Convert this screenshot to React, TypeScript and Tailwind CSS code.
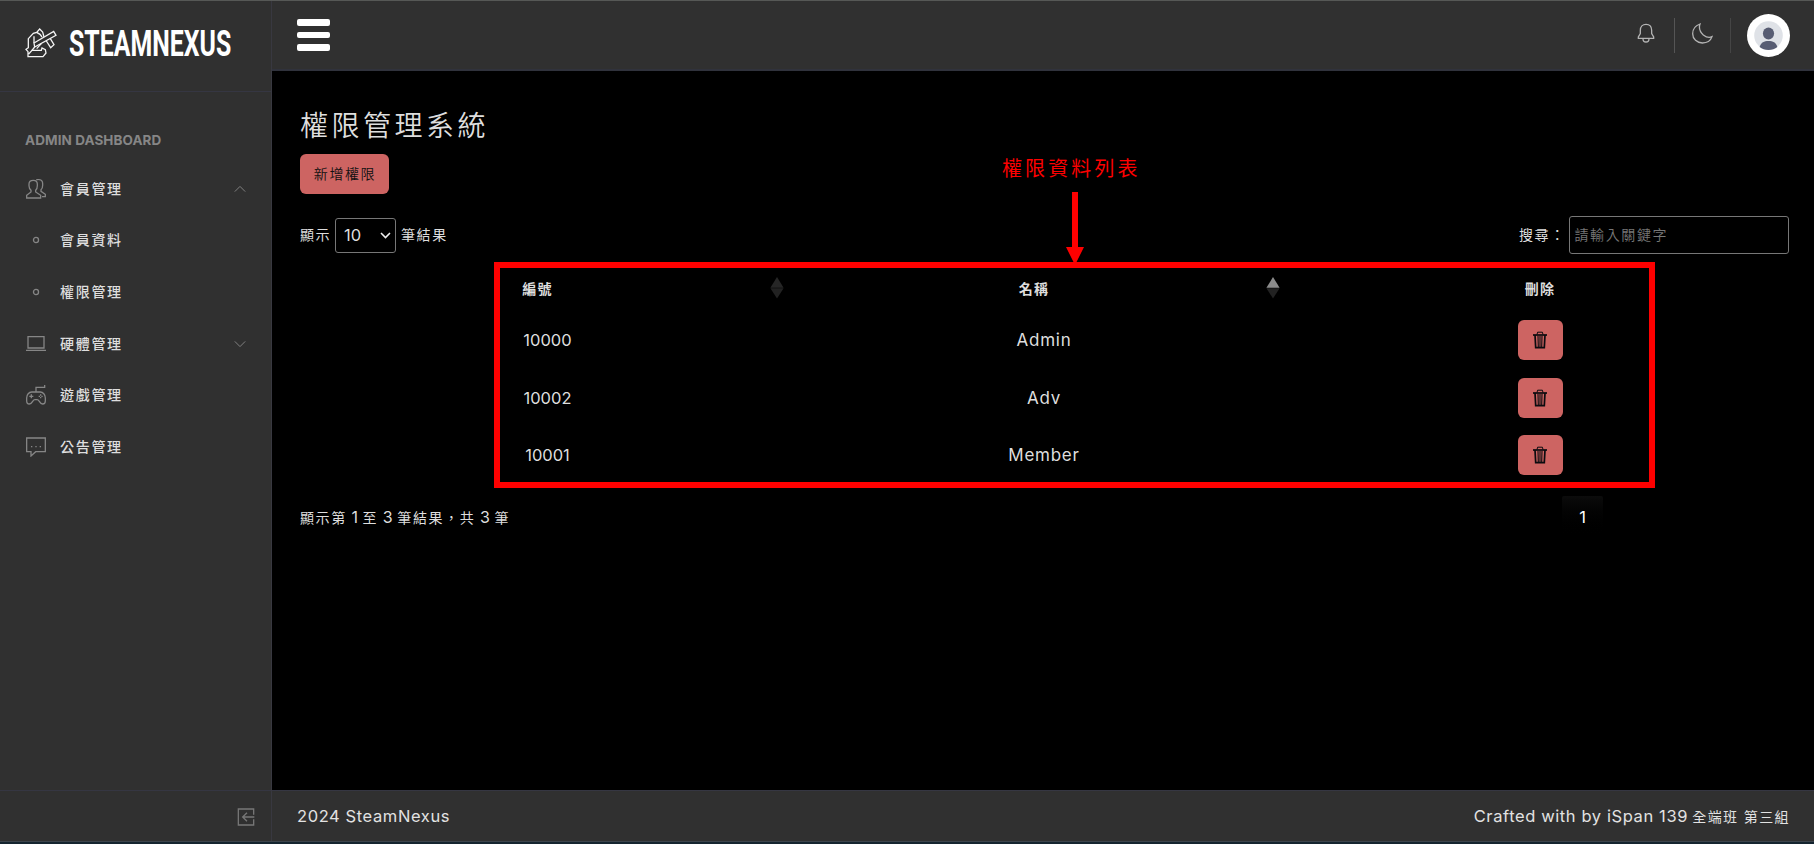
import React from "react";

const CJK = "font-['Inter','Noto_Sans_CJK_TC',sans-serif]";

const line = { fill: "none", stroke: "currentColor", strokeWidth: 3.9 } as const;

function Logo() {
  return (
    <svg className="h-[30px] w-8 shrink-0 text-[#f4f4f4]" viewBox="77 85 96 90" {...line} strokeWidth={3.9}>
      <path d="M104 130 L163 95 L170 107 L106 142 Z" />
      <path d="M134 112 L130 97 L121 88 L112 98 L102 101 L87 117 L87 144 L80 149 L86 156 L86 171 L131 171 L140 160 L138 150 L128 145 L126 152 H98 L88 163" />
      <path d="M112 98 L122 104 L128 112 M104 130 V110 M106 142 L98 152 M126 132 L112 147 M141 124 L154 144 L164 135 L153 117" />
    </svg>
  );
}

function PeopleIcon() {
  return (
    <svg className="h-5 w-5" viewBox="0 0 60 60" {...line}>
      <path d="M2 57 H44 V49 L29 39 V34 C33 30 34 26 34 20 V15 C34 7 30 4 22 4 C13 4 9 8 9 15 V20 C9 26 11 30 15 34 V39 L2 49 Z" />
      <path d="M31 3 C34 1 38 1 40 2 C47 3 50 7 50 14 V19 C50 25 49 29 45 32 V37 L58 46 V53 H48" />
    </svg>
  );
}
function DotIcon() {
  return (
    <svg className="h-5 w-5" viewBox="0 0 60 60" {...line}>
      <circle cx="30" cy="30" r="7.6" />
    </svg>
  );
}
function LaptopIcon() {
  return (
    <svg className="h-5 w-5" viewBox="0 0 60 60" {...line}>
      <path d="M6 8 H54 V42 H6 Z M0 49 H60" />
    </svg>
  );
}
function GamepadIcon() {
  return (
    <svg className="h-5 w-5" viewBox="0 0 60 60" {...line}>
      <path d="M56 0 V7 H30 V21" />
      <path d="M17 21 H43 C51 21 58 29 58 39 V48 C58 54 55 57 50 57 C45 57 43 54 40 49 C38 46 36 44 33 44 H27 C24 44 22 46 20 49 C17 54 15 57 10 57 C5 57 2 54 2 48 V39 C2 29 9 21 17 21 Z" />
      <path d="M16 28 V40 M10 34 H22" />
      <path d="M44 28 V32 M44 36 V40 M38 34 H42 M46 34 H50" />
    </svg>
  );
}
function ChatIcon() {
  return (
    <svg className="h-5 w-5" viewBox="0 0 60 60" {...line}>
      <path d="M2 3 H58 V44 H29 L15 57 V44 H2 Z" />
      <path d="M15 29 H19 M28 29 H32 M41 29 H45" />
    </svg>
  );
}
function Chevron({ up }: { up?: boolean }) {
  return (
    <svg className="h-3 w-3 text-[#808080]" viewBox="0 0 12 12" fill="none" stroke="currentColor" strokeWidth="1">
      <path d={up ? "M0.8 8.6 L6 3.4 L11.2 8.6" : "M0.8 3.4 L6 8.6 L11.2 3.4"} />
    </svg>
  );
}

const NAV: { label: string; icon: React.ReactNode; arrow?: "up" | "down" }[] = [
  { label: "會員管理", icon: <PeopleIcon />, arrow: "up" },
  { label: "會員資料", icon: <DotIcon /> },
  { label: "權限管理", icon: <DotIcon /> },
  { label: "硬體管理", icon: <LaptopIcon />, arrow: "down" },
  { label: "遊戲管理", icon: <GamepadIcon /> },
  { label: "公告管理", icon: <ChatIcon /> },
];

const ROWS = [
  { id: "10000", name: "Admin" },
  { id: "10002", name: "Adv" },
  { id: "10001", name: "Member" },
];

function Sidebar() {
  return (
    <aside className="flex w-[272px] shrink-0 flex-col border-r border-[#383840] bg-[#303030]">
      <div className="flex h-[91px] items-start border-b border-[#353642] pl-[25px] pt-[27px]">
        <Logo />
        <div className="ml-[12px] h-[32px] w-[163px]">
          <span className="inline-block origin-left scale-x-[0.672] whitespace-nowrap font-['Roboto',sans-serif] text-[37px] font-bold leading-[32px] text-white">
            STEAMNEXUS
          </span>
        </div>
      </div>
      <div className="pl-[25px] pt-[38px] text-[13.5px] font-bold leading-5 tracking-[0.08px] text-[#868686]">ADMIN DASHBOARD</div>
      <nav className="mt-[13px] flex flex-col">
        {NAV.map((n) => (
          <a key={n.label} className="flex h-[51.6px] items-center pl-[26px] pr-[25px] text-[#868686]">
            {n.icon}
            <span className="-mt-px ml-[14px] flex-1 text-[14px] font-medium tracking-[1.7px] text-[#dedede]">{n.label}</span>
            {n.arrow && <Chevron up={n.arrow === "up"} />}
          </a>
        ))}
      </nav>
      <div className="mt-auto flex h-[51px] items-center justify-end border-t border-[#353642] pr-[16px] pt-px text-[#777]">
        <svg className="h-[18px] w-[18px]" viewBox="0 0 54 54" {...line}>
          <path d="M50 20 V3 H4 V51 H50 V34 M52 27 H18 M30 14 L17 27 L30 40" />
        </svg>
      </div>
    </aside>
  );
}

function Header() {
  return (
    <header className="flex h-[70px] shrink-0 items-center border-b-2 border-[#30323c] bg-[#303030] pl-[25px] pr-[24px]">
      <div className="flex flex-col gap-[6px]">
        <i className="h-[6.6px] w-[33px] rounded-[2px] bg-white" />
        <i className="h-[6.6px] w-[33px] rounded-[2px] bg-white" />
        <i className="h-[6.6px] w-[33px] rounded-[2px] bg-white" />
      </div>
      <div className="ml-auto flex items-center text-[#b4b4b4]">
        <svg className="-mt-1 h-5 w-5" viewBox="0 0 60 60" {...line}>
          <path d="M7 46 V42 L13 32 V22 C13 11 20 4 30 4 C40 4 47 11 47 22 V32 L53 42 V46 Z M21 47 C21 53 25 57 30 57 C35 57 39 53 39 47" />
        </svg>
        <i className="ml-[18px] h-[35px] w-px bg-[#555]" />
        <svg className="-mt-1 ml-[17px] h-[21px] w-[21px]" viewBox="0 0 63 63" {...line}>
          <path d="M24 3 C10 8 2 19 2 32 C2 48 15 60 31 60 C45 60 56 53 60 41 C52 45 43 43 34 36 C24 27 20 15 24 3 Z" />
        </svg>
        <i className="ml-[17px] h-[35px] w-px bg-[#454545]" />
        <svg className="ml-[16px] h-[43px] w-[43px]" viewBox="0 0 43 43">
          <circle cx="21.5" cy="21.5" r="21.5" fill="#fff" />
          <circle cx="21.5" cy="21.5" r="14.3" fill="#dfe2e7" />
          <ellipse cx="21.5" cy="19.5" rx="5.6" ry="5.9" fill="#585d73" />
          <path d="M12.6 33 C14 28.5 17 27 21.5 27 C26 27 29 28.5 30.4 33 C28 35 25 36 21.5 36 C18 36 15 35 12.6 33 Z" fill="#585d73" />
        </svg>
      </div>
    </header>
  );
}

function SortIcon({ active }: { active?: boolean }) {
  return (
    <svg className="absolute right-[12px] top-[13px] h-[22px] w-[14px]" viewBox="0 0 14 22">
      <path d="M7 0 L13.6 10.8 H0.4 Z" fill={active ? "#8c8c8c" : "#262626"} />
      <path d="M0.4 11.2 H13.6 L7 21.5 Z" fill="#222" />
    </svg>
  );
}

function TrashButton() {
  return (
    <button className="flex h-10 w-[45px] items-center justify-center rounded-[6px] bg-[#cd6462]">
      <svg className="h-[18px] w-[16px]" viewBox="0 0 16 18" fill="none" stroke="#0b0b0f" strokeWidth="1.7">
        <path d="M1 4 H15" />
        <path d="M5 3.5 L5.6 1.2 H10.4 L11 3.5" strokeWidth="1" />
        <path d="M3 4 L3.7 16.6 H12.3 L13 4" />
        <path d="M6 5 L6.3 16 M8 5 V16 M10 5 L9.7 16" strokeWidth="1.1" />
      </svg>
    </button>
  );
}

function Table() {
  return (
    <div className="-mr-px grid w-[1488px] grid-cols-3 text-[#dedede]">
      <div className="relative flex h-[47px] items-center justify-center pr-[21px] pt-px text-[14px] font-bold tracking-[1.2px]">
        編號
        <SortIcon />
      </div>
      <div className="relative flex h-[47px] items-center justify-center pr-[20px] pt-px text-[14px] font-bold tracking-[1.2px]">
        名稱
        <SortIcon active />
      </div>
      <div className="flex h-[47px] items-center justify-center pt-px text-[14px] font-bold tracking-[1.2px]">刪除</div>
      {ROWS.map((r) => (
        <React.Fragment key={r.id}>
          <div className="flex h-[57.5px] items-center justify-center pr-px pt-[2px] text-[16.5px]">{r.id}</div>
          <div className="flex h-[57.5px] items-center justify-center pt-[2px] text-[17px] tracking-[0.75px]">{r.name}</div>
          <div className="flex h-[57.5px] items-center justify-center pt-px">
            <TrashButton />
          </div>
        </React.Fragment>
      ))}
    </div>
  );
}

export default function App() {
  return (
    <div className={`relative flex h-[844px] w-[1814px] flex-col overflow-hidden border-t border-[#565856] bg-black ${CJK}`}>
      <div className="flex min-h-0 flex-1">
        <Sidebar />
        <div className="flex min-w-0 flex-1 flex-col">
          <Header />
          <main className="flex-1 bg-black pl-[28px] pr-[25px] text-[14px] text-[#dedede]">
            <h1 className="pt-[35px] text-[28px] font-[350] leading-10 tracking-[3.5px]">權限管理系統</h1>
            <button className="mt-[8px] flex h-10 w-[89px] items-center justify-center rounded-[6px] bg-[#cd6462] pb-[2px] pl-px font-[350] tracking-[1.6px] text-[#111]">
              新增權限
            </button>
            <div className="mt-[22px] flex h-[38px] items-center">
              <span className="w-[35px] pb-px tracking-[1.6px]">顯示</span>
              <div className="flex h-[35px] w-[61px] items-center justify-between rounded-[3px] border border-[#777] pl-[8px] pr-[4px] text-[16.5px]">
                10
                <svg className="h-[11px] w-[11px]" viewBox="0 0 11 11" fill="none" stroke="#eee" strokeWidth="1.6">
                  <path d="M1 3 L5.5 7.5 L10 3" />
                </svg>
              </div>
              <span className="ml-[5px] pb-px tracking-[1.6px]">筆結果</span>
              <span className="ml-auto w-[49.500px] whitespace-nowrap pb-px tracking-[1.6px]">搜尋：</span>
              <div className="flex h-[38px] w-[220.500px] items-center rounded-[3px] border border-[#777] pb-[2px] pl-[5px] font-[350] tracking-[1.6px] text-[#777]">
                請輸入關鍵字
              </div>
            </div>
            <div className="mt-[10px]">
              <Table />
            </div>
            <div className="mt-[12px] flex h-[44px] items-center">
              <span className="pb-[2px] tracking-[1.6px] [word-spacing:-0.9px]">
                顯示第 <b className="text-[16px] font-normal tracking-normal">1</b> 至{" "}
                <b className="text-[16px] font-normal tracking-normal">3</b> 筆結果，共{" "}
                <b className="text-[16px] font-normal tracking-normal">3</b> 筆
              </span>
              <span className="ml-auto mr-[186px] flex h-[44px] w-[41px] items-center justify-center rounded-[2px] bg-gradient-to-b from-[#0c0c0c] to-black pb-px text-[16.5px] text-white">
                1
              </span>
            </div>
          </main>
          <footer className="flex h-[51px] items-center justify-between border-t border-[#353642] bg-[#303030] pl-[25px] pr-[24px] pt-px text-[16.5px] tracking-[0.6px] text-[#e2e2e2]">
            <span>2024 SteamNexus</span>
            <span className="whitespace-nowrap">
              Crafted with by iSpan 139 <span className="-ml-[1px] text-[14px] tracking-[1.4px]">全端班 第三組</span>
            </span>
          </footer>
        </div>
      </div>
      <div className="h-[3px] shrink-0 border-t border-[#3c444c] bg-[#14242f]" />

      <div className="absolute left-[494px] top-[261px] h-[226px] w-[1161px] border-[6px] border-[#fe0000]" />
      <div className="absolute left-[1002px] top-[154px] whitespace-nowrap text-[20px] font-normal leading-[28px] tracking-[3.1px] text-[#fe0000]">
        權限資料列表
      </div>
      <svg className="absolute left-[1066px] top-[191px] h-[73px] w-[18px]" viewBox="0 0 18 73" fill="#fe0000">
        <path d="M6 0 H12 V55 H18 L9 73 L0 55 H6 Z" />
      </svg>
    </div>
  );
}
